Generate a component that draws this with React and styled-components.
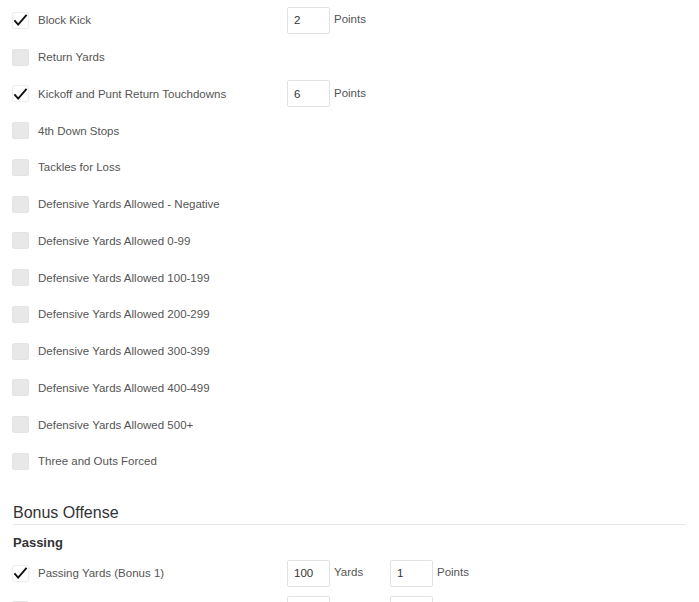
import React from "react";
import styled, { createGlobalStyle } from "styled-components";

const GlobalStyle = createGlobalStyle`
  body {
    margin: 0;
    background: #ffffff;
    font-family: "Liberation Sans", Arial, sans-serif;
  }
`;

const Page = styled.div`
  padding: 2px 13px 0 12px;
  width: 699px;
  height: 602px;
  overflow: hidden;
  box-sizing: border-box;
`;

const Row = styled.div`
  display: flex;
  align-items: center;
  height: 36.75px;
`;

const Box = styled.span`
  width: 17px;
  height: 17px;
  border-radius: 2px;
  box-sizing: border-box;
  flex: none;
  display: flex;
  align-items: center;
  justify-content: center;
  background: ${(p) => (p.$checked ? "#ffffff" : "#e8e8e8")};
  border: 1px solid ${(p) => (p.$checked ? "#eeeeee" : "#e4e4e4")};
`;

const Label = styled.span`
  margin-left: 9px;
  width: 249px;
  font-size: 11.5px;
  color: #555555;
`;

const Field = styled.span`
  display: flex;
  align-items: center;
  width: 103px;
`;

const Input = styled.span`
  width: 43px;
  height: 27px;
  box-sizing: border-box;
  border: 1px solid #e2e2e2;
  border-radius: 2px;
  padding-left: 6px;
  display: flex;
  align-items: center;
  font-size: 11.5px;
  color: #333333;
`;

const Unit = styled.span`
  margin-left: 4px;
  margin-top: -2px;
  font-size: 11.5px;
  color: #555555;
`;

const Heading = styled.h3`
  margin: 23px 0 0 1px;
  padding-bottom: 2px;
  font-size: 16px;
  line-height: 19px;
  font-weight: normal;
  color: #333333;
  border-bottom: 1px solid #e6e6e6;
`;

const SubHeading = styled.h4`
  margin: 10px 0 4px 1px;
  font-size: 13px;
  line-height: 16px;
  font-weight: bold;
  color: #333333;
`;

const Check = () => (
  <svg width="16" height="14" viewBox="0 0 16 14">
    <polyline
      points="1.5,7.5 5.5,12 14.5,1.5"
      fill="none"
      stroke="#111111"
      strokeWidth="2"
    />
  </svg>
);

const defense = [
  { label: "Block Kick", checked: true, fields: [["2", "Points"]] },
  { label: "Return Yards" },
  {
    label: "Kickoff and Punt Return Touchdowns",
    checked: true,
    fields: [["6", "Points"]],
  },
  { label: "4th Down Stops" },
  { label: "Tackles for Loss" },
  { label: "Defensive Yards Allowed - Negative" },
  { label: "Defensive Yards Allowed 0-99" },
  { label: "Defensive Yards Allowed 100-199" },
  { label: "Defensive Yards Allowed 200-299" },
  { label: "Defensive Yards Allowed 300-399" },
  { label: "Defensive Yards Allowed 400-499" },
  { label: "Defensive Yards Allowed 500+" },
  { label: "Three and Outs Forced" },
];

const passing = [
  {
    label: "Passing Yards (Bonus 1)",
    checked: true,
    fields: [
      ["100", "Yards"],
      ["1", "Points"],
    ],
  },
  {
    label: "",
    fields: [
      ["", ""],
      ["", ""],
    ],
  },
];

function SettingRow({ label, checked, fields = [] }) {
  return (
    <Row>
      <Box $checked={checked}>{checked && <Check />}</Box>
      <Label>{label}</Label>
      {fields.map(([value, unit], i) => (
        <Field key={i}>
          <Input>{value}</Input>
          <Unit>{unit}</Unit>
        </Field>
      ))}
    </Row>
  );
}

export default function App() {
  return (
    <Page>
      <GlobalStyle />
      {defense.map((r) => (
        <SettingRow key={r.label} {...r} />
      ))}
      <Heading>Bonus Offense</Heading>
      <SubHeading>Passing</SubHeading>
      {passing.map((r, i) => (
        <SettingRow key={i} {...r} />
      ))}
    </Page>
  );
}
